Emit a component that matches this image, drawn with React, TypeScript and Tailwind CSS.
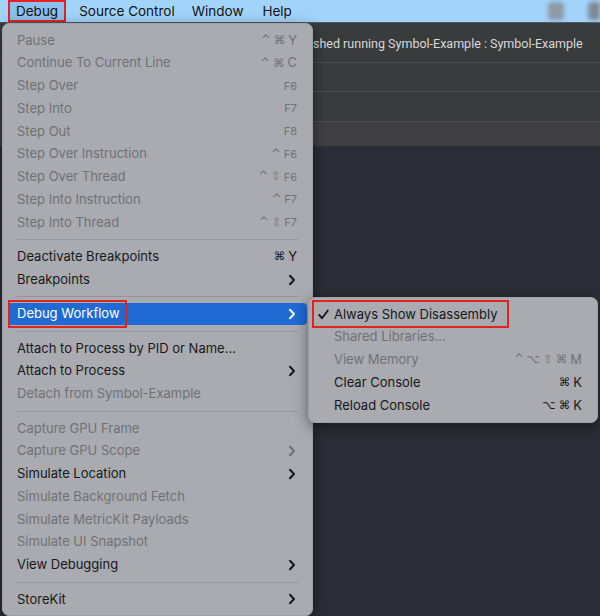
import React from "react";

type Item = {
  label: string;
  shortcut?: string;
  disabled?: boolean;
  submenu?: boolean;
  active?: boolean;
  boxed?: boolean;
};

type Entry = Item | "sep";

const debugMenu: Entry[] = [
  { label: "Pause", shortcut: "^⌘Y", disabled: true },
  { label: "Continue To Current Line", shortcut: "^⌘C", disabled: true },
  { label: "Step Over", shortcut: "F6", disabled: true },
  { label: "Step Into", shortcut: "F7", disabled: true },
  { label: "Step Out", shortcut: "F8", disabled: true },
  { label: "Step Over Instruction", shortcut: "^F6", disabled: true },
  { label: "Step Over Thread", shortcut: "^⇧F6", disabled: true },
  { label: "Step Into Instruction", shortcut: "^F7", disabled: true },
  { label: "Step Into Thread", shortcut: "^⇧F7", disabled: true },
  "sep",
  { label: "Deactivate Breakpoints", shortcut: "⌘Y" },
  { label: "Breakpoints", submenu: true },
  "sep",
  { label: "Debug Workflow", submenu: true, active: true, boxed: true },
  "sep",
  { label: "Attach to Process by PID or Name..." },
  { label: "Attach to Process", submenu: true },
  { label: "Detach from Symbol-Example", disabled: true },
  "sep",
  { label: "Capture GPU Frame", disabled: true },
  { label: "Capture GPU Scope", disabled: true, submenu: true },
  { label: "Simulate Location", submenu: true },
  { label: "Simulate Background Fetch", disabled: true },
  { label: "Simulate MetricKit Payloads", disabled: true },
  { label: "Simulate UI Snapshot", disabled: true },
  { label: "View Debugging", submenu: true },
  "sep",
  { label: "StoreKit", submenu: true },
];

const workflowMenu: Item[] = [
  { label: "Always Show Disassembly", boxed: true },
  { label: "Shared Libraries...", disabled: true },
  { label: "View Memory", shortcut: "^⌥⇧⌘M", disabled: true },
  { label: "Clear Console", shortcut: "⌘K" },
  { label: "Reload Console", shortcut: "⌥⌘K" },
];

function Chevron({ light }: { light?: boolean }) {
  return (
    <svg width="8" height="12" viewBox="0 0 8 12" className="mr-[1px]">
      <path
        d="M2 1.8 L6 6 L2 10.2"
        fill="none"
        stroke={light ? "#ffffff" : "currentColor"}
        strokeWidth="2"
        strokeLinecap="round"
        strokeLinejoin="round"
      />
    </svg>
  );
}

// modifiers in DejaVu, keys in Inter; function keys are drawn smaller
function Shortcut({ text }: { text: string }) {
  const fkey = text.match(/F\d$/);
  const mods = fkey ? text.slice(0, -2) : text.slice(0, -1);
  const key = fkey ? fkey[0] : text.slice(-1);
  return (
    <span className="flex items-center gap-[3px]">
      {mods.split("").map((m, i) => (
        <span key={i} className="font-['DejaVu_Sans',sans-serif] text-[11.5px]">
          {m}
        </span>
      ))}
      <span className={fkey ? "text-[11px]" : "text-[13px]"}>{key}</span>
    </span>
  );
}

function MenuRow({ item }: { item: Item }) {
  const color = item.active
    ? "text-white"
    : item.disabled
    ? "text-[#6f7176]"
    : "text-[#17181a]";
  return (
    <div
      className={`relative flex h-[22.75px] items-center justify-between rounded-[4px] pl-[9px] pr-[10px] ${
        item.active ? "bg-[#1f6bd3]" : ""
      } ${color}`}
    >
      <span>{item.label}</span>
      {item.shortcut && <Shortcut text={item.shortcut} />}
      {item.submenu && <Chevron light={item.active} />}
      {item.boxed && (
        <div className="absolute left-0 top-[-3px] h-[28px] w-[119px] border-2 border-[#e5231d]" />
      )}
    </div>
  );
}

export default function App(): React.ReactNode {
  return (
    <div className="relative h-[616px] w-[600px] overflow-hidden bg-[#2c2c36] font-['Inter',sans-serif] text-[13px]">
      {/* menu bar */}
      <header className="flex h-[22px] items-center bg-[#a2d3fa] text-[13.5px] text-[#111]">
        <div className="relative ml-[8px] flex h-[22px] items-center bg-[#8dc0ec] px-[8px]">
          Debug
          <div className="absolute inset-0 border-2 border-[#e5231d]" />
        </div>
        <span className="ml-[13px]">Source Control</span>
        <span className="ml-[17px]">Window</span>
        <span className="ml-[19px]">Help</span>
        <div className="ml-auto flex h-full items-center gap-[24px]">
          <div className="h-[18px] w-[16px] rounded-[4px] bg-[#8e9aa6] blur-[2px]" />
          <div className="h-[18px] w-[12px] rounded-l-[4px] bg-[#7f8a96] blur-[2px]" />
        </div>
      </header>
      <div className="h-[1px] bg-[#55585c]" />

      {/* editor area, the run status is partly hidden behind the menu */}
      <div className="flex h-[39px] items-center whitespace-nowrap bg-[#3a3b3d] pl-[313px] pt-[3px] font-['Roboto',sans-serif] text-[12.5px] text-[#d8d8d8]">
        shed running Symbol-Example : Symbol-Example
      </div>
      <div className="h-[1px] bg-[#4b4d4f]" />
      <div className="h-[28px] bg-[#3a3b3d]" />
      <div className="h-[1px] bg-[#4b4d4f]" />
      <div className="h-[29px] bg-[#3a3b3d]" />
      <div className="h-[1px] bg-[#4b4d4f]" />
      <div className="h-[24px] bg-[#404042]" />
      <div className="h-[1px] bg-[#303036]" />

      {/* Debug menu */}
      <div className="absolute left-[2px] top-[23px] w-[311px] rounded-[7px] border border-[#9ea0a5] bg-[#a9abb0] px-[5px] pb-[4px] pt-[5px] shadow-[0_4px_14px_rgba(0,0,0,0.45)]">
        {debugMenu.map((entry, i) =>
          entry === "sep" ? (
            <div key={i} className="flex h-[11.7px] items-center px-[9px]">
              <div className="h-[1px] w-full bg-[#94969b]" />
            </div>
          ) : (
            <MenuRow key={i} item={entry} />
          )
        )}
      </div>

      {/* Debug Workflow submenu */}
      <div className="absolute left-[308px] top-[297px] w-[290px] rounded-[7px] border border-[#9ea0a5] bg-[#a9abb0] px-[5px] py-[5px] shadow-[0_4px_14px_rgba(0,0,0,0.45)]">
        {workflowMenu.map((item, i) => (
          <div
            key={i}
            className={`relative flex h-[22.75px] items-center justify-between pl-[20px] pr-[10px] ${
              item.disabled ? "text-[#6f7176]" : "text-[#17181a]"
            }`}
          >
            {item.boxed && (
              <svg width="11" height="11" viewBox="0 0 11 11" className="absolute left-[4px]">
                <path
                  d="M1.2 6 L4 9.2 L9.8 1.5"
                  fill="none"
                  stroke="#17181a"
                  strokeWidth="1.9"
                  strokeLinecap="round"
                  strokeLinejoin="round"
                />
              </svg>
            )}
            <span>{item.label}</span>
            {item.shortcut && <Shortcut text={item.shortcut} />}
            {item.boxed && (
              <div className="absolute left-[-2px] top-[-3px] h-[28px] w-[197px] border-2 border-[#e5231d]" />
            )}
          </div>
        ))}
      </div>
    </div>
  );
}
